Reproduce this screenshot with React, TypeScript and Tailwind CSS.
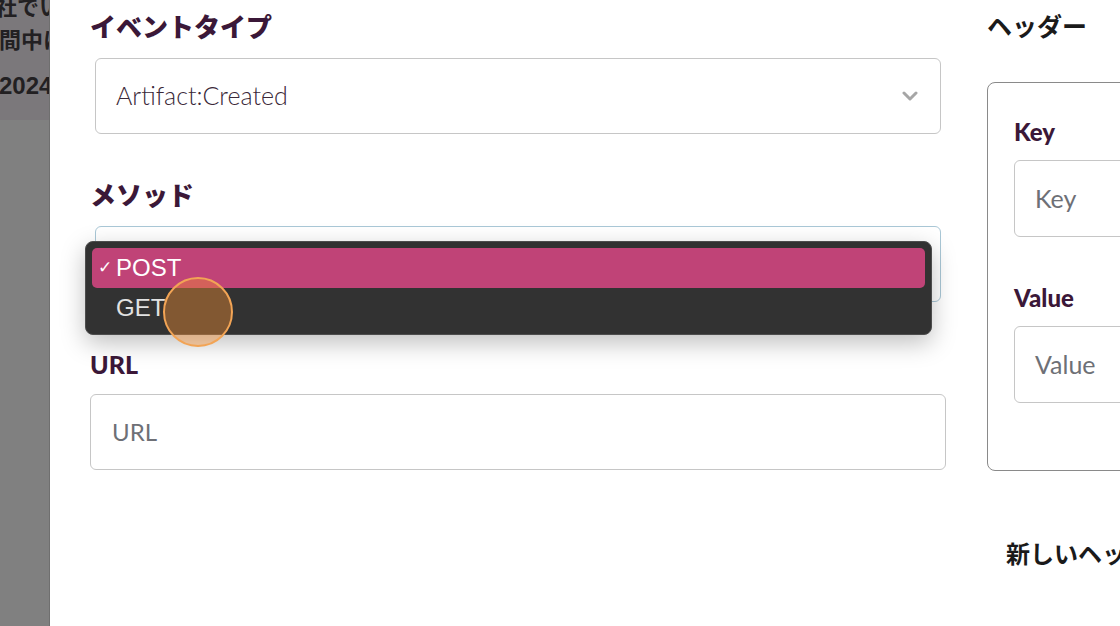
import React from "react";

const jp = { fontFamily: '"Lato", "Noto Sans CJK JP", sans-serif' };

export default function App() {
  return (
    <div className="w-[1120px] h-[626px] flex overflow-hidden bg-white relative" style={jp}>
      {/* Left dimmed background strip */}
      <div className="w-[50px] shrink-0 flex flex-col bg-[#808080] border-r border-[#6f6f6f]">
        <div className="h-[120px] bg-[#7b787b] overflow-hidden text-[#222022] font-bold whitespace-nowrap" style={{ fontFamily: '"Noto Sans CJK JP", sans-serif' }}>
          <div className="text-[22px] leading-[30px] mt-[-10px] ml-[-5px]">社でい</div>
          <div className="text-[22px] leading-[30px] mt-[3px] ml-[-1px]">間中に</div>
          <div className="text-[24px] leading-[30px] mt-[18px] ml-[-1px]" style={{ fontFamily: '"Liberation Sans", sans-serif' }}>2024年</div>
        </div>
      </div>

      {/* Modal */}
      <div className="flex-1 flex bg-white">
        {/* Left column */}
        <div className="w-[896px] shrink-0 pl-[40px] pt-[10px] flex flex-col">
          <div className="h-[34px] leading-[34px] text-[26px] font-black text-[#3b1838]">イベントタイプ</div>
          <div className="mt-[14px] ml-[5px] w-[846px] h-[76px] rounded-[6px] border border-[#c6c6c6] flex items-center justify-between pl-[20px] pr-[22px]">
            <span className="text-[25px] font-light text-[#3a2838]">Artifact:Created</span>
            <svg width="16" height="12" viewBox="0 0 16 12">
              <path d="M2 3 L8 9 L14 3" fill="none" stroke="#a6a6a6" strokeWidth="3" strokeLinecap="round" strokeLinejoin="round" />
            </svg>
          </div>

          <div className="mt-[44px] h-[34px] leading-[34px] text-[26px] font-black text-[#3b1838]">メソッド</div>
          <div className="mt-[14px] ml-[5px] w-[846px] h-[76px] rounded-[6px] border border-[#a9c7d6]"></div>

          <div className="mt-[45px] h-[34px] leading-[34px] text-[25px] font-black text-[#3b1838]">URL</div>
          <div className="mt-[13px] w-[856px] h-[76px] rounded-[6px] border border-[#c6c6c6] flex items-center pl-[21px]">
            <span className="text-[24px] text-[#6e7076]">URL</span>
          </div>
        </div>

        {/* Right column */}
        <div className="pl-[41px] pt-[8px] flex flex-col">
          <div className="h-[34px] leading-[34px] text-[25px] font-bold text-[#1a1a1a]" style={{ fontFamily: '"Noto Sans CJK JP", sans-serif' }}>ヘッダー</div>
          <div className="mt-[40px] w-[300px] h-[389px] rounded-[8px] border border-[#8a8a8a] pl-[26px] pt-[33px] flex flex-col">
            <div className="h-[32px] leading-[32px] text-[24px] font-black text-[#3b1838]">Key</div>
            <div className="mt-[12px] w-[260px] h-[77px] rounded-[6px] border border-[#c6c6c6] flex items-center pl-[20px]">
              <span className="text-[25px] text-[#6e7076]">Key</span>
            </div>
            <div className="mt-[45px] h-[32px] leading-[32px] text-[24px] font-black text-[#3b1838]">Value</div>
            <div className="mt-[12px] w-[260px] h-[77px] rounded-[6px] border border-[#c6c6c6] flex items-center pl-[20px]">
              <span className="text-[25px] text-[#6e7076]">Value</span>
            </div>
          </div>
          <div className="mt-[65px] ml-[19px] h-[34px] leading-[34px] text-[24px] font-bold text-[#1a1a1a] whitespace-nowrap" style={{ fontFamily: '"Noto Sans CJK JP", sans-serif' }}>新しいヘッダー</div>
        </div>
      </div>

      {/* Native-style dropdown menu */}
      <div className="absolute left-[85px] top-[241px] w-[847px] h-[94px] rounded-[8px] bg-[#323232] border border-[#4d4d4d] shadow-[0_8px_24px_rgba(0,0,0,0.25)] p-[6px] flex flex-col" style={{ fontFamily: '"Liberation Sans", Arial, sans-serif' }}>
        <div className="h-[40px] rounded-[5px] bg-[#c04377] flex items-center text-white">
          <span className="w-[24px] text-[17px] text-center pl-[2px]">✓</span>
          <span className="text-[24px]">POST</span>
        </div>
        <div className="h-[40px] flex items-center text-[#e2e2e2]">
          <span className="w-[24px]"></span>
          <span className="text-[24px]">GET</span>
        </div>
      </div>

      {/* Click indicator */}
      <div className="absolute left-[163px] top-[277px] w-[70px] h-[70px] rounded-full bg-[rgba(240,140,50,0.42)] border-2 border-[#f2a455]"></div>
    </div>
  );
}
